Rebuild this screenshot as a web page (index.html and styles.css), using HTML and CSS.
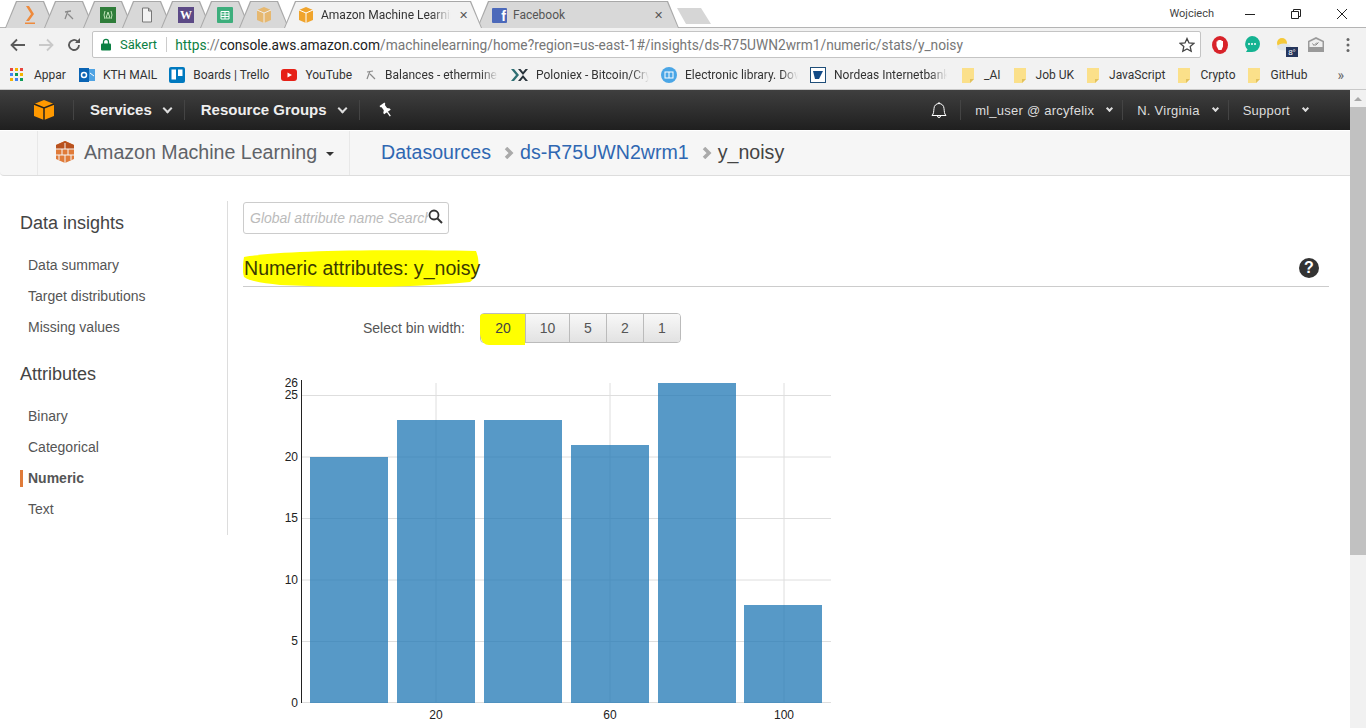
FILE: index.html
```html
<!DOCTYPE html>
<html lang="en">
<head>
    <meta charset="UTF-8">
    <title>Amazon Machine Learning</title>
    <link rel="stylesheet" href="styles.css">
</head>
<body>
    <div class="tabstrip">
        <div class="tab pinned"><span class="tab-in">
            <svg width="16" height="20" viewBox="0 0 16 20"><path d="M4 1h3l5 8-5 7H4l5-7z" fill="#ee8a3c"/><rect x="3" y="17.500" width="10" height="1.500" fill="#ee8a3c"/></svg>
        </span></div>
        <div class="tab pinned"><span class="tab-in">
            <svg width="12" height="12" viewBox="0 0 12 12"><path d="M2 3l6-1M5 2L2 10M5 5l5 5" stroke="#8a8a8a" stroke-width="1.300" fill="none"/></svg>
        </span></div>
        <div class="tab pinned"><span class="tab-in">
            <svg width="16" height="16" viewBox="0 0 16 16"><rect width="16" height="16" fill="#2f7d3a"/><path d="M5 4Q3 8 5 12M11 4q2 4 0 8M8 5l-2 6h4z" stroke="#bfe3b8" fill="none"/></svg>
        </span></div>
        <div class="tab pinned"><span class="tab-in">
            <svg width="12" height="16" viewBox="0 0 12 16"><path d="M1.500 1h6l3 3v11h-9zM7.500 1v3h3" stroke="#777" fill="#f2f2f2"/></svg>
        </span></div>
        <div class="tab pinned"><span class="tab-in"><span class="w-icon">W</span></span></div>
        <div class="tab pinned"><span class="tab-in">
            <svg width="16" height="16" viewBox="0 0 16 16"><rect width="16" height="16" rx="1" fill="#3dae7c"/><path d="M4 4.500h8v7.500H4zM4 7h8M4 9.500h8M8 4.500V12" stroke="#fff" fill="none"/></svg>
        </span></div>
        <div class="tab pinned"><span class="tab-in">
            <svg class="faded" width="16" height="18" viewBox="0 0 16 18"><path d="M8 1l7 3v10l-7 3-7-3V4z" fill="#f0a42c"/><path d="M1 4l7 3 7-3M8 7v10" stroke="#fff" fill="none"/></svg>
        </span></div>
        <div class="tab active"><span class="tab-in">
            <svg width="16" height="18" viewBox="0 0 16 18"><path d="M8 1l7 3v10l-7 3-7-3V4z" fill="#f0a42c"/><path d="M1 4l7 3 7-3M8 7v10" stroke="#fff" fill="none"/></svg>
            <span class="tab-title">Amazon Machine Learning</span>
            <span class="tab-x">&#10005;</span>
        </span></div>
        <div class="tab fb"><span class="tab-in">
            <span class="fb-icon">f</span>
            <span class="tab-title">Facebook</span>
            <span class="tab-x">&#10005;</span>
        </span></div>
        <div class="new-tab"></div>
        <div class="win-user">Wojciech</div>
        <div class="win-btns">
            <svg width="12" height="12" viewBox="0 0 12 12"><path d="M1 6.500h10" stroke="#222"/></svg>
            <svg width="12" height="12" viewBox="0 0 12 12"><path d="M1.500 3.500h7v7h-7zM3.500 3.500v-2h7v7h-2" stroke="#222" fill="none"/></svg>
            <svg width="12" height="12" viewBox="0 0 12 12"><path d="M1 1l10 10M11 1L1 11" stroke="#222"/></svg>
        </div>
    </div>

    <div class="toolbar">
        <svg width="16" height="14" viewBox="0 0 16 14"><path d="M15 7H2M7 1.500L1.500 7 7 12.500" stroke="#5a5a5a" stroke-width="1.800" fill="none"/></svg>
        <svg width="16" height="14" viewBox="0 0 16 14"><path d="M1 7h13M9 1.500L14.500 7 9 12.500" stroke="#c9c9c9" stroke-width="1.800" fill="none"/></svg>
        <svg class="reload" width="16" height="16" viewBox="0 0 16 16"><path d="M13 8a5 5 0 1 1-1.500-3.600" stroke="#5a5a5a" stroke-width="1.800" fill="none"/><path d="M14 1v5H9z" fill="#5a5a5a"/></svg>
        <div class="omnibox">
            <svg width="10" height="13" viewBox="0 0 10 13"><path d="M2.500 6V3.800a2.500 2.500 0 0 1 5 0V6" stroke="#0b8043" stroke-width="1.300" fill="none"/><rect y="5.500" width="10" height="7" rx="1" fill="#0b8043"/></svg>
            <span class="secure">Säkert</span>
            <span class="url"><span class="url-s">https</span>://<span class="url-host">console.aws.amazon.com</span>/machinelearning/home?region=us-east-1#/insights/ds-R75UWN2wrm1/numeric/stats/y_noisy</span>
            <svg class="star" width="16" height="16" viewBox="0 0 16 16"><path d="M8 1.500l2 4.400 4.800.5-3.600 3.200 1 4.700L8 11.900l-4.200 2.400 1-4.700L1.200 6.400 6 5.900z" stroke="#444" stroke-width="1.300" fill="none"/></svg>
        </div>
        <div class="ext-icons">
            <svg width="16" height="18" viewBox="0 0 16 18"><ellipse cx="8" cy="9" rx="8" ry="9" fill="#d8232a"/><path d="M4.500 7V5.500h1V4.500h1V4h3v1h1.500v5.500L9.500 14h-3L4.500 10z" fill="#fff"/></svg>
            <svg width="16" height="17" viewBox="0 0 16 17"><path d="M8 0a8 8 0 0 1 8 8 8 8 0 0 1-8 8H2l1.500-2.500A8 8 0 0 1 8 0z" fill="#15b392"/><circle cx="5" cy="8" r="1" fill="#fff"/><circle cx="8" cy="8" r="1" fill="#fff"/><circle cx="11" cy="8" r="1" fill="#fff"/></svg>
            <svg class="ext-weather" width="22" height="22" viewBox="0 0 22 22"><circle cx="6" cy="7" r="5" fill="#f5c93a"/><ellipse cx="8" cy="11" rx="7" ry="3.500" fill="#dfe5ea"/><rect x="10" y="11" width="12" height="10" fill="#26365c"/><text class="temp" x="16" y="19" text-anchor="middle">8°</text></svg>
            <svg class="ext-check" width="16" height="15" viewBox="0 0 16 15"><path d="M0 4l8-4 8 4v11H0z" fill="#9a9a9a"/><path d="M1.500 5l6.500-3 6.500 3v5h-13z" fill="#efefef"/><path d="M4.500 6.500l1.500 2 3-3M7.500 8.500l3-3" stroke="#888" fill="none"/></svg>
            <svg class="ext-menu" width="4" height="16" viewBox="0 0 4 16"><circle cx="2" cy="2.500" r="1.500" fill="#666"/><circle cx="2" cy="8" r="1.500" fill="#666"/><circle cx="2" cy="13.500" r="1.500" fill="#666"/></svg>
        </div>
    </div>

    <div class="bookmarks">
        <div class="bm">
            <svg width="16" height="14" viewBox="0 0 16 14"><g>
                <rect width="3" height="3" fill="#e8453c"/><rect x="5" width="3" height="3" fill="#f4b400"/><rect x="10" width="3" height="3" fill="#e8453c"/>
                <rect y="5" width="3" height="3" fill="#4285f4"/><rect x="5" y="5" width="3" height="3" fill="#0f9d58"/><rect x="10" y="5" width="3" height="3" fill="#f4b400"/>
                <rect y="10" width="3" height="3" fill="#f4b400"/><rect x="5" y="10" width="3" height="3" fill="#4285f4"/><rect x="10" y="10" width="3" height="3" fill="#0f9d58"/>
            </g></svg>
            <span class="bm-label">Appar</span>
        </div>
        <div class="bm bm-kth">
            <svg width="16" height="16" viewBox="0 0 16 16"><rect x="6" y="2" width="10" height="12" fill="#4fa3e3"/><rect y="1" width="10" height="14" fill="#0a64b4"/><circle cx="5" cy="8" r="2.500" fill="none" stroke="#fff" stroke-width="1.500"/><path d="M11 6l4 3" stroke="#fff"/></svg>
            <span class="bm-label">KTH MAIL</span>
        </div>
        <div class="bm">
            <svg width="16" height="16" viewBox="0 0 16 16"><rect width="16" height="16" rx="2" fill="#0079bf"/><rect x="2.500" y="2.500" width="4.500" height="10" fill="#fff"/><rect x="9" y="2.500" width="4.500" height="6.500" fill="#fff"/></svg>
            <span class="bm-label">Boards | Trello</span>
        </div>
        <div class="bm">
            <svg width="16" height="16" viewBox="0 0 16 16"><rect y="2" width="16" height="12" rx="3" fill="#e62117"/><path d="M6.500 5.500v5L11 8z" fill="#fff"/></svg>
            <span class="bm-label">YouTube</span>
        </div>
        <div class="bm bm-wide bm-lead">
            <svg width="12" height="12" viewBox="0 0 12 12"><path d="M2 3l6-1M5 2L2 10M5 5l5 5" stroke="#8a8a8a" stroke-width="1.200" fill="none"/></svg>
            <span class="bm-label">Balances - ethermine</span>
        </div>
        <div class="bm bm-wide">
            <svg width="18" height="14" viewBox="0 0 18 14"><path d="M1 1l5 6-5 6h3l5-6-5-6z" fill="#2f6f73"/><path d="M8 1l5 6-5 6h2.500L13 10l2.500 3H18l-5-6 5-6h-2.500L13 4l-2.500-3z" fill="#27323a"/></svg>
            <span class="bm-label">Poloniex - Bitcoin/Crypto</span>
        </div>
        <div class="bm bm-wide">
            <svg width="16" height="16" viewBox="0 0 16 16"><circle cx="8" cy="8" r="8" fill="#4aa6e6"/><rect x="4" y="5" width="8" height="6" fill="none" stroke="#fff"/><path d="M8 5v6" stroke="#fff"/></svg>
            <span class="bm-label">Electronic library. Download</span>
        </div>
        <div class="bm bm-wide">
            <svg width="16" height="16" viewBox="0 0 16 16"><rect x=".5" y=".5" width="15" height="15" fill="#fff" stroke="#1f4e79"/><path d="M3 4h10l-4 8H5z" fill="#124a86"/></svg>
            <span class="bm-label">Nordeas Internetbank</span>
        </div>
        <div class="bm bm-folder"><svg class="folder" width="12" height="15" viewBox="0 0 12 15"><path d="M0 0h12v11l-4 4H0z" fill="#fbe08a"/><path d="M12 11H8v4z" fill="#e2c25e"/></svg><span class="bm-label">_AI</span></div>
        <div class="bm bm-folder"><svg class="folder" width="12" height="15" viewBox="0 0 12 15"><path d="M0 0h12v11l-4 4H0z" fill="#fbe08a"/><path d="M12 11H8v4z" fill="#e2c25e"/></svg><span class="bm-label">Job UK</span></div>
        <div class="bm bm-folder"><svg class="folder" width="12" height="15" viewBox="0 0 12 15"><path d="M0 0h12v11l-4 4H0z" fill="#fbe08a"/><path d="M12 11H8v4z" fill="#e2c25e"/></svg><span class="bm-label">JavaScript</span></div>
        <div class="bm bm-folder"><svg class="folder" width="12" height="15" viewBox="0 0 12 15"><path d="M0 0h12v11l-4 4H0z" fill="#fbe08a"/><path d="M12 11H8v4z" fill="#e2c25e"/></svg><span class="bm-label">Crypto</span></div>
        <div class="bm bm-folder"><svg class="folder" width="12" height="15" viewBox="0 0 12 15"><path d="M0 0h12v11l-4 4H0z" fill="#fbe08a"/><path d="M12 11H8v4z" fill="#e2c25e"/></svg><span class="bm-label">GitHub</span></div>
        <div class="bm-more">»</div>
    </div>

    <div class="viewport">
        <div class="page">
            <div class="aws-nav">
                <svg class="aws-logo" width="22" height="22" viewBox="0 0 22 22"><path d="M11 1l10 4v12l-10 4-10-4V5z" fill="#f90"/><path d="M1 5l10 4 10-4M11 9v12" stroke="#26231f" stroke-width="1.500" fill="none"/></svg>
                <span class="nav-sep"></span>
                <span class="nav-menu">Services<span class="caret"></span></span>
                <span class="nav-sep"></span>
                <span class="nav-menu">Resource Groups<span class="caret"></span></span>
                <span class="nav-sep"></span>
                <svg class="pin" width="16" height="16" viewBox="0 0 16 16"><g transform="rotate(-35 8 8)"><path d="M5 1h6v1.500l-1 .7v3.800l2 2v1.500H4V9l2-2V3.200l-1-.7z" fill="#fff"/><path d="M8 10v5.500" stroke="#fff" stroke-width="1.300"/></g></svg>
                <span class="nav-right">
                    <svg width="18" height="18" viewBox="0 0 18 18"><path d="M2 14.500c2-2 1.500-4 2-7a5 5 0 0 1 10 0c.500 3 0 5 2 7zM7.500 15a1.500 1.500 0 0 0 3 0M9 1v2" stroke="#fff" fill="none"/></svg>
                    <span class="nav-sep"></span>
                    <span class="nav-item">ml_user @ arcyfelix<span class="caret small"></span></span>
                    <span class="nav-sep"></span>
                    <span class="nav-item">N. Virginia<span class="caret small"></span></span>
                    <span class="nav-sep"></span>
                    <span class="nav-item">Support<span class="caret small"></span></span>
                </span>
            </div>

            <div class="crumbs">
                <div class="crumb-service">
                    <svg width="22" height="24" viewBox="0 0 22 24"><path d="M11 1l9 4v14l-9 4-9-4V5z" fill="#e07b39"/><path d="M11 1l9 4v4H2V5z" fill="#b9521f"/><path d="M2 9h18M2 15h18M8 9v6M14 9v6M5 15v5M11 15v8M17 15v5M11 3v6" stroke="#f6f6f6" fill="none"/></svg>
                    <span class="service-name">Amazon Machine Learning</span>
                    <span class="service-caret"></span>
                </div>
                <div class="crumb-path">
                    <a class="crumb-link">Datasources</a>
                    <svg class="crumb-arrow" width="10" height="12" viewBox="0 0 10 12"><path d="M2 1l5 5-5 5" stroke="#aaa" stroke-width="3.500" fill="none"/></svg>
                    <a class="crumb-link">ds-R75UWN2wrm1</a>
                    <svg class="crumb-arrow" width="10" height="12" viewBox="0 0 10 12"><path d="M2 1l5 5-5 5" stroke="#aaa" stroke-width="3.500" fill="none"/></svg>
                    <span class="crumb-current">y_noisy</span>
                </div>
            </div>

            <div class="content">
                <div class="sidebar">
                    <h3>Data insights</h3>
                    <ul>
                        <li>Data summary</li>
                        <li>Target distributions</li>
                        <li>Missing values</li>
                    </ul>
                    <h3>Attributes</h3>
                    <ul>
                        <li>Binary</li>
                        <li>Categorical</li>
                        <li class="current">Numeric</li>
                        <li>Text</li>
                    </ul>
                </div>

                <div class="main">
                    <div class="search">
                        <span class="search-text">Global attribute name Search</span>
                        <svg width="15" height="15" viewBox="0 0 15 15"><circle cx="6" cy="6" r="4.500" stroke="#333" stroke-width="1.800" fill="none"/><path d="M9.500 9.500L14 14" stroke="#333" stroke-width="2"/></svg>
                    </div>
                    <div class="title-row">
                        <h2>
                            <svg class="marker" width="238" height="40" viewBox="0 0 238 40"><path d="M1 8C30 3 100 0 233 2c4 10 4 24-6 31-60 6-120 6-190 3C20 34 6 32 1 28c-2-6-1-14 0-20z" fill="#ff0"/></svg>
                            <span class="title-text">Numeric attributes: y_noisy</span>
                        </h2>
                        <span class="help">?</span>
                    </div>
                    <div class="bins">
                        <span class="bins-label">Select bin width:</span>
                        <div class="bin-group">
                            <span class="bin on">20</span>
                            <span class="bin b10">10</span>
                            <span class="bin">5</span>
                            <span class="bin">2</span>
                            <span class="bin">1</span>
                        </div>
                    </div>
                    <svg class="chart" width="600" height="370" viewBox="270 370 600 370">
                        <g class="grid">
                            <path d="M301 395.500H831M301 457H831M301 518.500H831M301 580H831M301 641.500H831M301 702.500H831"/>
                            <path d="M436 383V703M610 383V703M784 383V703"/>
                        </g>
                        <g class="bars">
                            <rect x="310" y="457" width="78" height="246"/>
                            <rect x="397" y="420" width="78" height="283"/>
                            <rect x="484" y="420" width="78" height="283"/>
                            <rect x="571" y="445" width="78" height="258"/>
                            <rect x="658" y="383" width="78" height="320"/>
                            <rect x="744" y="605" width="78" height="98"/>
                        </g>
                        <path class="axis" d="M301.500 380V703"/>
                        <g class="y-ticks">
                            <text x="298" y="387">26</text>
                            <text x="298" y="399">25</text>
                            <text x="298" y="461">20</text>
                            <text x="298" y="522">15</text>
                            <text x="298" y="584">10</text>
                            <text x="298" y="645">5</text>
                            <text x="298" y="707">0</text>
                        </g>
                        <g class="x-ticks">
                            <text x="436" y="719">20</text>
                            <text x="610" y="719">60</text>
                            <text x="784" y="719">100</text>
                        </g>
                    </svg>
                </div>
            </div>
        </div>
        <div class="scrollbar">
            <div class="scroll-up"></div>
            <div class="scroll-thumb"></div>
        </div>
    </div>
</body>
</html>
```

FILE: styles.css
```css
html, body {
    margin: 0;
    padding: 0;
    height: 728px;
    overflow: hidden;
    background-color: #fff;
}

body {
    font-family: "Liberation Sans", Arial, sans-serif;
    color: #444;
}

/* browser chrome */
.tabstrip {
    display: flex;
    height: 28px;
    padding-left: 5px;
    box-sizing: border-box;
    background-color: #fff;
    border-bottom: 1px solid #b4b4b4;
    font-family: Roboto, sans-serif;
    font-size: 12px;
}

.tab {
    height: 27px;
    margin-top: 1px;
    margin-left: -11px;
    padding: 1px 1px 0;
    box-sizing: border-box;
    background-color: #a8a8a8;
    clip-path: polygon(11px 0, calc(100% - 11px) 0, 100% 100%, 0 100%);
}

.tab:first-child {
    margin-left: 0;
}

.tab-in {
    display: flex;
    align-items: center;
    justify-content: center;
    height: 100%;
    background-color: #d8d8d8;
    clip-path: polygon(11px 0, calc(100% - 11px) 0, 100% 100%, 0 100%);
}

.pinned {
    width: 50px;
}

.active, .fb {
    margin-left: -5px;
    z-index: 1;
}

.active {
    width: 198px;
    z-index: 2;
}

.active .tab-in {
    background-color: #f2f2f2;
    justify-content: flex-start;
    padding-left: 13px;
}

.fb {
    width: 202px;
}

.fb .tab-in {
    justify-content: flex-start;
    padding-left: 14px;
}

.tab-title {
    margin-left: 7px;
    width: 130px;
    white-space: nowrap;
    overflow: hidden;
    color: #333;
    -webkit-mask-image: linear-gradient(to right, #000 85%, transparent);
    mask-image: linear-gradient(to right, #000 85%, transparent);
}

.fb .tab-title {
    margin-left: 6px;
    width: 133px;
    color: #555;
    -webkit-mask-image: none;
    mask-image: none;
}

.tab-x {
    margin-left: 8px;
    font-size: 11px;
    color: #555;
}

.faded {
    opacity: 0.6;
}

.w-icon {
    width: 16px;
    height: 16px;
    background-color: #5c4a86;
    color: #fff;
    font: bold 12px/16px "Liberation Serif", serif;
    text-align: center;
}

.fb-icon {
    width: 15px;
    height: 15px;
    border-radius: 1px;
    background-color: #4c69ba;
    color: #fff;
    font: bold 14px/17px "Liberation Sans", sans-serif;
    text-align: right;
    padding-right: 1px;
    box-sizing: border-box;
    overflow: hidden;
}

.new-tab {
    width: 34px;
    height: 16px;
    margin: 8px 0 0 -2px;
    background-color: #d6d6d6;
    clip-path: polygon(0 0, 24px 0, 100% 100%, 9px 100%);
}

.win-user {
    margin-left: auto;
    padding-top: 7px;
    font-size: 11px;
    color: #444;
}

.win-btns {
    display: flex;
    gap: 34px;
    align-items: center;
    height: 28px;
    margin: 0 18px 0 30px;
}

.toolbar {
    display: flex;
    align-items: center;
    gap: 12px;
    height: 33px;
    padding: 0 0 0 10px;
    box-sizing: border-box;
    background-color: #f2f2f2;
}

.omnibox {
    display: flex;
    align-items: center;
    flex: none;
    width: 1109px;
    height: 27px;
    margin-left: -2px;
    padding-left: 8px;
    box-sizing: border-box;
    background-color: #fff;
    border: 1px solid #c4c4c4;
    border-radius: 2px;
    font-family: Roboto, sans-serif;
    font-size: 13px;
    color: #777;
    white-space: nowrap;
}

.secure {
    margin-left: 9px;
    padding-right: 9px;
    border-right: 1px solid #ccc;
    color: #0b8043;
}

.url {
    margin-left: 8px;
    font-size: 13.75px;
}

.url-s {
    color: #0b8043;
}

.url-host {
    color: #222;
}

.star {
    margin-left: auto;
    margin-right: 5px;
}

.ext-icons {
    display: flex;
    align-items: center;
    gap: 16px;
    margin-left: -1px;
}

.ext-weather {
    margin: 4px -2px 0 0;
}

.ext-check {
    margin-left: -4px;
}

.ext-menu {
    margin-left: 6px;
}

.temp {
    fill: #fff;
    font: 8px "Liberation Sans", sans-serif;
}

.bookmarks {
    display: flex;
    align-items: center;
    gap: 12px;
    height: 29px;
    padding: 0 0 0 10px;
    box-sizing: border-box;
    background-color: #f2f2f2;
    border-bottom: 1px solid #c9c9c9;
    font-family: Roboto, sans-serif;
    font-size: 12px;
    color: #333;
    white-space: nowrap;
}

.bm {
    display: flex;
    align-items: center;
    gap: 8px;
}

.bm-kth {
    margin-left: 1px;
}

.bm-lead {
    margin-left: 1px;
}

.bm-wide .bm-label {
    display: block;
    width: 113px;
    overflow: hidden;
    -webkit-mask-image: linear-gradient(to right, #000 85%, transparent);
    mask-image: linear-gradient(to right, #000 85%, transparent);
}

.bm-wide svg {
    flex: none;
}

.bm-folder {
    gap: 10px;
}

.bm-wide + .bm-folder {
    margin-left: 3px;
}

.bm-folder + .bm-folder {
    margin-left: 1px;
}

.bm-more {
    margin-left: auto;
    margin-right: 22px;
    font-size: 14px;
    color: #666;
}

/* aws console */
.viewport {
    display: flex;
    height: 639px;
    overflow: hidden;
}

.page {
    flex: 1;
    min-width: 0;
}

.aws-nav {
    display: flex;
    align-items: center;
    height: 40px;
    padding-left: 33px;
    box-sizing: border-box;
    background: linear-gradient(#3f3f3f, #1f1f1f);
    color: #fff;
    font-size: 13px;
    white-space: nowrap;
}

.aws-logo {
    margin-right: 18px;
}

.nav-sep {
    width: 1px;
    height: 20px;
    background-color: #444;
}

.nav-menu {
    display: flex;
    align-items: center;
    padding: 0 13px 1px 16px;
    font-size: 15px;
    font-weight: bold;
    color: #eee;
}

.caret {
    width: 5px;
    height: 5px;
    margin: -3px 0 0 12px;
    border-right: 2px solid #ddd;
    border-bottom: 2px solid #ddd;
    transform: rotate(45deg);
}

.caret.small {
    width: 3px;
    height: 3px;
    margin-left: 13px;
}

.pin {
    margin-left: 18px;
}

.nav-right {
    display: flex;
    align-items: center;
    margin-left: auto;
    margin-right: 32px;
}

.nav-right > svg {
    margin-right: 12px;
}

.nav-item {
    display: flex;
    align-items: center;
    padding: 0 10px 0 14px;
    color: #ddd;
    letter-spacing: 0.25px;
}

.crumbs {
    display: flex;
    align-items: center;
    height: 45px;
    margin-top: 1px;
    padding-left: 37px;
    box-sizing: border-box;
    background-color: #f6f6f6;
    border-bottom: 1px solid #ddd;
    border-radius: 0 0 0 4px;
}

.crumb-service {
    display: flex;
    align-items: center;
    width: 313px;
    height: 100%;
    padding: 0 0 2px 16px;
    box-sizing: border-box;
    border-left: 1px solid #e8e8e8;
    border-right: 1px solid #e8e8e8;
}

.service-name {
    margin-left: 8px;
    font-size: 19.6px;
    color: #5f6368;
}

.service-caret {
    margin: 4px 0 0 9px;
    border-top: 4px solid #333;
    border-left: 4px solid transparent;
    border-right: 4px solid transparent;
}

.crumb-path {
    display: flex;
    align-items: center;
    margin-left: 31px;
    padding-bottom: 2px;
    font-size: 19.6px;
}

.crumb-link {
    color: #2f67b2;
}

.crumb-arrow {
    margin: 2px 6px 0 13px;
}

.crumb-current {
    color: #444;
}

.content {
    display: flex;
    align-items: flex-start;
}

.sidebar {
    width: 228px;
    height: 334px;
    margin-top: 25px;
    padding: 5px 0 0 20px;
    box-sizing: border-box;
    border-right: 1px solid #ddd;
}

.sidebar h3 {
    margin: 0;
    height: 22px;
    padding-top: 8px;
    font-size: 18px;
    font-weight: normal;
    line-height: 18px;
    color: #444;
}

.sidebar ul {
    list-style: none;
    margin: 14px 0 14px;
    padding: 0;
}

.sidebar li {
    height: 31px;
    padding-left: 8px;
    font-size: 14px;
    line-height: 31px;
    color: #555;
}

.sidebar li.current {
    margin-left: 0;
    padding-left: 5px;
    border-left: 3px solid #e07b39;
    height: 17px;
    line-height: 17px;
    margin-top: 7px;
    margin-bottom: 7px;
    font-weight: bold;
}

.main {
    flex: 1;
    min-width: 0;
    padding: 26px 21px 0 15px;
}

.search {
    display: flex;
    align-items: center;
    width: 206px;
    height: 32px;
    padding: 0 5px 0 6px;
    box-sizing: border-box;
    border: 1px solid #ccc;
    border-radius: 3px;
}

.search svg {
    margin-top: -4px;
}

.search-text {
    flex: 1;
    overflow: hidden;
    white-space: nowrap;
    font-size: 14px;
    font-style: italic;
    color: #bbb;
}

.title-row {
    display: flex;
    justify-content: space-between;
    align-items: center;
    height: 53px;
    box-sizing: border-box;
    padding-top: 16px;
    border-bottom: 1px solid #ccc;
}

.title-row h2 {
    position: relative;
    margin: 0;
    font-size: 19.6px;
    font-weight: normal;
    color: #333;
}

.title-text {
    position: relative;
    margin-left: 1px;
    color: #3a3a00;
}

/* highlighter stroke behind the heading */
.marker {
    position: absolute;
    left: 0;
    top: -8px;
}

.help {
    width: 20px;
    height: 20px;
    margin: 0 10px 0 0;
    border-radius: 50%;
    background-color: #333;
    color: #fff;
    font-size: 16px;
    font-weight: bold;
    line-height: 20px;
    text-align: center;
}

.bins {
    display: flex;
    align-items: center;
    height: 30px;
    margin-top: 26px;
    padding-left: 120px;
    font-size: 14px;
}

.bins-label {
    margin-right: 15px;
    color: #555;
}

.bin-group {
    display: flex;
    height: 30px;
    border: 1px solid #bbb;
    border-radius: 4px;
    box-sizing: border-box;
}

.bin {
    width: 36px;
    border-left: 1px solid #bbb;
    background: linear-gradient(#f8f8f8, #e2e2e2);
    line-height: 28px;
    text-align: center;
    color: #555;
}

.bin.on {
    width: 44px;
    border-left: 0;
    border-radius: 3px 0 0 8px;
    background: #ff0;
    box-shadow: -1px 0 0 #ff0, 0 3px 0 #ff0;
    color: #444;
}

.bin.b10 {
    width: 43px;
}

.bin:last-child {
    border-radius: 0 3px 3px 0;
}

.chart {
    display: block;
    margin: 27px 0 0 27px;
}

.grid path {
    fill: none;
    stroke: #dedede;
}

.bars rect {
    fill: #1f77b4;
    fill-opacity: 0.75;
}

.axis {
    fill: none;
    stroke: #222;
}

.y-ticks text, .x-ticks text {
    font: 12px "Liberation Sans", sans-serif;
    fill: #222;
}

.y-ticks text {
    text-anchor: end;
}

.x-ticks text {
    text-anchor: middle;
}

.scrollbar {
    width: 16px;
    background-color: #f1f1f1;
}

.scroll-up {
    width: 0;
    height: 0;
    margin: 7px auto 6px;
    border-bottom: 4px solid #a8a8a8;
    border-left: 4px solid transparent;
    border-right: 4px solid transparent;
}

.scroll-thumb {
    height: 448px;
    background-color: #c1c1c1;
}
```
